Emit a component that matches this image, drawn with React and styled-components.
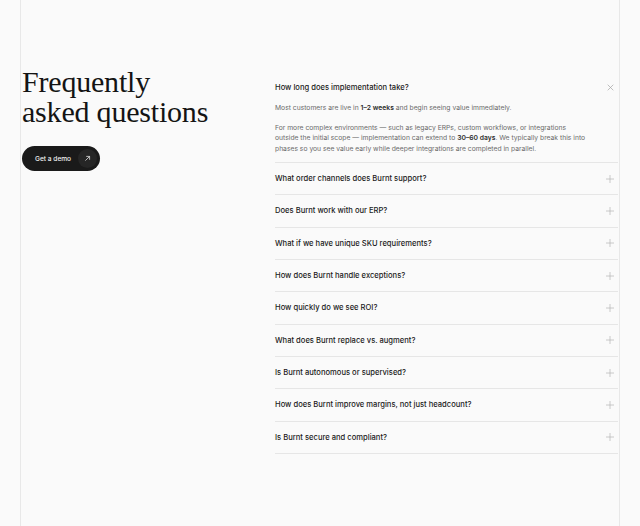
import React, { useState } from 'react';
import styled, { createGlobalStyle } from 'styled-components';

const GlobalStyle = createGlobalStyle`
  html, body {
    margin: 0;
    padding: 0;
    background: #fafafa;
  }
  * {
    box-sizing: border-box;
  }
`;

const faqs = [
  {
    q: 'How long does implementation take?',
    a: [
      <>Most customers are live in <b>1–2 weeks</b> and begin seeing value immediately.</>,
      <>
        For more complex environments — such as legacy ERPs, custom workflows, or integrations
        outside the initial scope — implementation can extend to <b>30–60 days</b>. We typically
        break this into phases so you see value early while deeper integrations are completed in
        parallel.
      </>,
    ],
  },
  { q: 'What order channels does Burnt support?' },
  { q: 'Does Burnt work with our ERP?' },
  { q: 'What if we have unique SKU requirements?' },
  { q: 'How does Burnt handle exceptions?' },
  { q: 'How quickly do we see ROI?' },
  { q: 'What does Burnt replace vs. augment?' },
  { q: 'Is Burnt autonomous or supervised?' },
  { q: 'How does Burnt improve margins, not just headcount?' },
  { q: 'Is Burnt secure and compliant?' },
];

const FaqSection = () => {
  const [open, setOpen] = useState(0);

  return (
    <Page>
      <GlobalStyle />
      <Section>
        <Intro>
          <Title>
            Frequently
            <br />
            asked questions
          </Title>
          <DemoButton type="button">
            Get a demo
            <ArrowBadge>
              <svg width="7" height="7" viewBox="0 0 10 10" fill="none">
                <path d="M2 8L8 2M3.2 2H8V6.8" stroke="#e6e6e6" strokeWidth="1.1" />
              </svg>
            </ArrowBadge>
          </DemoButton>
        </Intro>

        <FaqList>
          {faqs.map((item, i) => {
            const isOpen = open === i;
            return (
              <FaqItem key={item.q}>
                <Question type="button" $open={isOpen} onClick={() => setOpen(isOpen ? -1 : i)}>
                  {item.q}
                  <Toggle>
                    {isOpen ? (
                      <svg width="7" height="7" viewBox="0 0 10 10" fill="none">
                        <path d="M1 1L9 9M9 1L1 9" stroke="#a3a3a3" strokeWidth="1" />
                      </svg>
                    ) : (
                      <svg width="8" height="8" viewBox="0 0 10 10" fill="none">
                        <path d="M5 0V10M0 5H10" stroke="#b5b5b5" strokeWidth="0.9" />
                      </svg>
                    )}
                  </Toggle>
                </Question>
                {isOpen && item.a && (
                  <Answer>
                    {item.a.map((p, j) => (
                      <p key={j}>{p}</p>
                    ))}
                  </Answer>
                )}
              </FaqItem>
            );
          })}
        </FaqList>
      </Section>
    </Page>
  );
};

const Page = styled.div`
  width: 600px;
  min-height: 526px;
  margin: 0 auto;
  border-left: 1px solid #e8e8e8;
  border-right: 1px solid #e8e8e8;
  background: #fafafa;
`;

const Section = styled.section`
  display: grid;
  grid-template-columns: 253px 1fr;
  padding: 67px 1px 0 1px;
`;

const Intro = styled.div`
  display: flex;
  flex-direction: column;
  align-items: flex-start;
  gap: 19px;
`;

const Title = styled.h2`
  margin: 0;
  font-family: 'Liberation Serif', 'DejaVu Serif', serif;
  font-weight: 400;
  font-size: 30px;
  line-height: 30px;
  letter-spacing: -0.2px;
  color: #141414;
`;

const DemoButton = styled.button`
  display: flex;
  align-items: center;
  gap: 7px;
  height: 25px;
  padding: 0 3px 0 13px;
  border: 0;
  border-radius: 999px;
  background: #1a1a1a;
  color: #f2f2f2;
  font-family: Inter, 'Liberation Sans', sans-serif;
  font-size: 6.6px;
  font-weight: 500;
  cursor: pointer;
`;

const ArrowBadge = styled.span`
  display: flex;
  align-items: center;
  justify-content: center;
  width: 19px;
  height: 19px;
  border-radius: 50%;
  background: #262626;
`;

const FaqList = styled.div`
  margin-top: 4px;
  display: flex;
  flex-direction: column;
`;

const FaqItem = styled.div`
  border-bottom: 1px solid #e6e6e6;
`;

const Question = styled.button`
  display: flex;
  align-items: center;
  justify-content: space-between;
  width: 100%;
  height: ${p => (p.$open ? '32px' : '31.33px')};
  padding: 0;
  border: 0;
  background: none;
  font-family: Inter, 'Liberation Sans', sans-serif;
  font-size: 7.6px;
  font-weight: 500;
  color: #1a1a1a;
  text-align: left;
  cursor: pointer;
`;

const Toggle = styled.span`
  display: flex;
  align-items: center;
  justify-content: center;
  width: 16px;
`;

const Answer = styled.div`
  max-width: 314px;
  padding-bottom: 8px;
  font-family: Inter, 'Liberation Sans', sans-serif;
  font-size: 6.75px;
  line-height: 10.5px;
  color: #6b6b6b;

  p {
    margin: 0 0 9px;
  }
  p:last-child {
    margin-bottom: 0;
  }
  b {
    font-weight: 600;
    color: #2a2a2a;
  }
`;

export default FaqSection;
